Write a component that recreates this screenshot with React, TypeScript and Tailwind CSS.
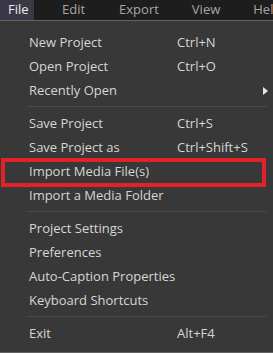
import React from "react";

type Item =
  | { kind: "item"; label: string; shortcut?: string; submenu?: boolean; marked?: boolean }
  | { kind: "sep" };

const items: Item[] = [
  { kind: "item", label: "New Project", shortcut: "Ctrl+N" },
  { kind: "item", label: "Open Project", shortcut: "Ctrl+O" },
  { kind: "item", label: "Recently Open", submenu: true },
  { kind: "sep" },
  { kind: "item", label: "Save Project", shortcut: "Ctrl+S" },
  { kind: "item", label: "Save Project as", shortcut: "Ctrl+Shift+S" },
  { kind: "item", label: "Import Media File(s)", marked: true },
  { kind: "item", label: "Import a Media Folder" },
  { kind: "sep" },
  { kind: "item", label: "Project Settings" },
  { kind: "item", label: "Preferences" },
  { kind: "item", label: "Auto-Caption Properties" },
  { kind: "item", label: "Keyboard Shortcuts" },
  { kind: "sep" },
  { kind: "item", label: "Exit", shortcut: "Alt+F4" },
];

const topMenus = [
  { label: "File", active: true },
  { label: "Edit", gap: "ml-[28px]" },
  { label: "Export", gap: "ml-[34px]" },
  { label: "View", gap: "ml-[33px]" },
  { label: "Help", gap: "ml-[33px]" },
];

export default function App() {
  return (
    <div
      className="w-[273px] h-[353px] overflow-hidden bg-[#383838] flex flex-col text-[13px]"
      style={{ fontFamily: '"Open Sans", "Noto Sans", sans-serif' }}
    >
      {/* Menu bar */}
      <div className="h-[20px] shrink-0 bg-[#1d1d1d] flex items-center whitespace-nowrap">
        {topMenus.map((m) =>
          m.active ? (
            <div
              key={m.label}
              className="h-full w-[34px] shrink-0 bg-[#3b3846] text-[#ececec] flex items-center pl-[8px]"
            >
              {m.label}
            </div>
          ) : (
            <div key={m.label} className={`h-full shrink-0 text-[#a6a6a6] flex items-center ${m.gap}`}>
              {m.label}
            </div>
          )
        )}
      </div>

      {/* Dropdown panel */}
      <div className="flex-1 border-t border-b border-[#626262] pt-[10px] flex flex-col">
        {items.map((it, i) =>
          it.kind === "sep" ? (
            <div key={i} className="h-[9px] pt-[3px] pl-[27px] pr-[6px]">
              <div className="h-px bg-[#4b4b4b]" />
            </div>
          ) : (
            <div
              key={i}
              className="relative h-[24px] flex items-center pl-[29px] text-[#d6d6d6]"
            >
              <span className="w-[148px] shrink-0">{it.label}</span>
              {it.shortcut && <span>{it.shortcut}</span>}
              {it.submenu && (
                <svg
                  className="absolute right-[5px] top-[8px]"
                  width="5"
                  height="8"
                  viewBox="0 0 5 8"
                >
                  <path d="M0 0 L5 4 L0 8 Z" fill="#e6e6e6" />
                </svg>
              )}
              {it.marked && (
                <span className="absolute left-[1px] right-[7px] top-[-2px] bottom-[-3px] border-[4px] border-[#e2222b]" />
              )}
            </div>
          )
        )}
      </div>
    </div>
  );
}
